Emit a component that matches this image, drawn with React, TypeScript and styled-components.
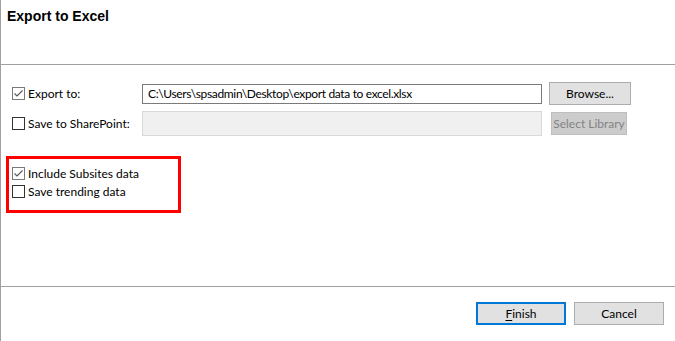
import React, { useState } from "react";
import styled, { createGlobalStyle, css } from "styled-components";

const GlobalStyle = createGlobalStyle`
  html, body {
    margin: 0;
    padding: 0;
    background: #ffffff;
  }
  body {
    font-family: Lato, "Open Sans", sans-serif;
    font-size: 12px;
    color: #000;
  }
`;

const LineColor = "#a0a0a0";

const Dialog = styled.div`
  width: 674px;
  height: 341px;
  border-left: 1px solid ${LineColor};
  display: flex;
  flex-direction: column;
  background: #fff;
`;

const Header = styled.div`
  height: 65px;
  flex: none;
  border-bottom: 1px solid ${LineColor};
  padding: 8px 0 0 6px;
  box-sizing: border-box;
`;

const Title = styled.h1`
  margin: 0;
  font-family: "Liberation Sans", Arial, sans-serif;
  font-weight: bold;
  font-size: 14px;
  line-height: 16px;
`;

const Body = styled.div`
  height: 221px;
  flex: none;
  box-sizing: border-box;
  padding: 17px 0 0 5px;
  display: flex;
  flex-direction: column;
`;

const FormGrid = styled.div`
  display: grid;
  grid-template-columns: 130px 400px auto;
  grid-auto-rows: auto;
  row-gap: 6px;
  align-items: center;
  padding-left: 6px;
`;

const FieldBox = styled.div<{ $disabled?: boolean }>`
  box-sizing: border-box;
  height: ${(p) => (p.$disabled ? "25px" : "20px")};
  border: 1px solid ${(p) => (p.$disabled ? "#d9d9d9" : "#7a7a7a")};
  background: ${(p) => (p.$disabled ? "#f0f0f0" : "#fff")};
  padding: 0 5px;
  display: flex;
  align-items: center;
  white-space: nowrap;
  overflow: hidden;
  letter-spacing: -0.35px;
`;

const ButtonCell = styled.div<{ $inset?: number }>`
  padding-left: ${(p) => p.$inset ?? 7}px;
  display: flex;
`;

const Button = styled.button<{ $w: number; $default?: boolean; $disabled?: boolean }>`
  box-sizing: border-box;
  width: ${(p) => p.$w}px;
  height: 23px;
  margin: 0;
  padding: 0;
  font-family: inherit;
  font-size: 12px;
  white-space: nowrap;
  color: #000;
  background: #e1e1e1;
  border: 1px solid #adadad;
  cursor: default;
  ${(p) =>
    p.$default &&
    css`
      border: 2px solid #0078d7;
    `}
  ${(p) =>
    p.$disabled &&
    css`
      background: #cccccc;
      border-color: #bfbfbf;
      color: #838383;
    `}
  u {
    text-decoration: underline;
    text-underline-offset: 2px;
  }
`;

const CheckRow = styled.label<{ $h?: number }>`
  display: flex;
  align-items: center;
  height: ${(p) => p.$h ?? 18}px;
  gap: 3px;
  white-space: nowrap;
  cursor: default;
`;

const Box = styled.span<{ $checked: boolean }>`
  box-sizing: border-box;
  width: 13px;
  height: 13px;
  flex: none;
  border: 1px solid ${(p) => (p.$checked ? "#7a7a7a" : "#333333")};
  background: #fff;
  display: flex;
  align-items: center;
  justify-content: center;
`;

const Highlight = styled.div`
  margin-top: 20px;
  width: 175px;
  height: 57px;
  box-sizing: border-box;
  border: 3px solid #ff0000;
  padding: 5px 0 0 3px;
`;

const Footer = styled.div`
  height: 51px;
  flex: none;
  border-top: 1px solid ${LineColor};
  border-bottom: 1px solid ${LineColor};
  display: flex;
  justify-content: flex-end;
  align-items: flex-start;
  gap: 8px;
  padding: 15px 11px 0 0;
  box-sizing: content-box;
`;

const Checkbox = ({
  label,
  checked,
  onToggle,
  height,
}: {
  label: string;
  checked: boolean;
  onToggle: () => void;
  height?: number;
}) => (
  <CheckRow $h={height} onClick={onToggle}>
    <Box $checked={checked}>
      {checked && (
        <svg width="11" height="11" viewBox="0 0 11 11">
          <path d="M1.5 5.5 L4 8 L9.5 2.5" fill="none" stroke="#555" strokeWidth="1.1" />
        </svg>
      )}
    </Box>
    {label}
  </CheckRow>
);

export default function App() {
  const [exportTo, setExportTo] = useState(true);
  const [toSharePoint, setToSharePoint] = useState(false);
  const [subsites, setSubsites] = useState(true);
  const [trending, setTrending] = useState(false);

  return (
    <>
      <GlobalStyle />
      <Dialog>
        <Header>
          <Title>Export to Excel</Title>
        </Header>
        <Body>
          <FormGrid>
            <Checkbox label="Export to:" checked={exportTo} onToggle={() => setExportTo(!exportTo)} height={23} />
            <FieldBox>C:\Users\spsadmin\Desktop\export data to excel.xlsx</FieldBox>
            <ButtonCell>
              <Button $w={82}>Browse...</Button>
            </ButtonCell>
            <Checkbox
              label="Save to SharePoint:"
              checked={toSharePoint}
              onToggle={() => setToSharePoint(!toSharePoint)}
              height={25}
            />
            <FieldBox $disabled />
            <ButtonCell $inset={9}>
              <Button $w={76} $disabled>
                Select Library
              </Button>
            </ButtonCell>
          </FormGrid>
          <Highlight>
            <Checkbox label="Include Subsites data" checked={subsites} onToggle={() => setSubsites(!subsites)} />
            <Checkbox label="Save trending data" checked={trending} onToggle={() => setTrending(!trending)} />
          </Highlight>
        </Body>
        <Footer>
          <Button $w={90} $default>
            <u>F</u>inish
          </Button>
          <Button $w={90}>Cancel</Button>
        </Footer>
      </Dialog>
    </>
  );
}
